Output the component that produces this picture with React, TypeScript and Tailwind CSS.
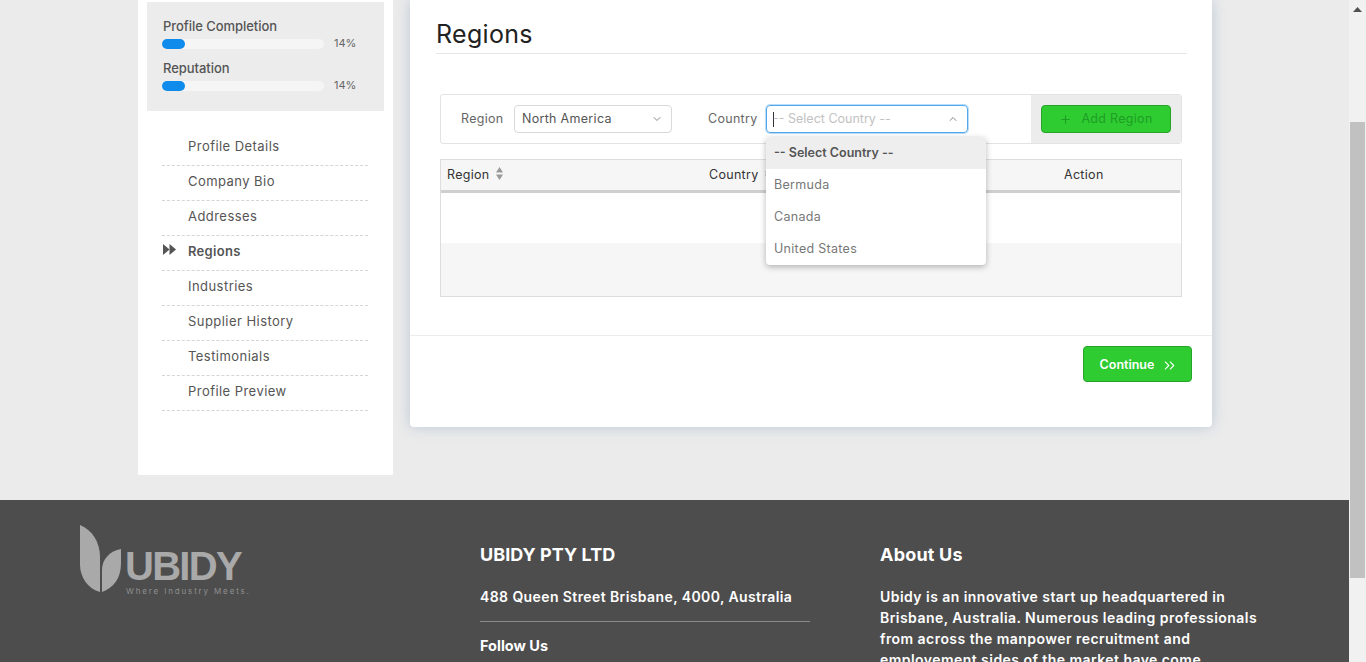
import { ChevronDown, ChevronUp, ChevronsRight, Plus } from 'lucide-react'

const navItems = ['Profile Details', 'Company Bio', 'Addresses', 'Regions', 'Industries', 'Supplier History', 'Testimonials', 'Profile Preview']
const countries = ['Bermuda', 'Canada', 'United States']

function Progress({ label }: { label: string }) {
  return (
    <div className="h-[42px]">
      <div className="h-[19px] pl-[16px] text-[13px] leading-[19px] font-medium tracking-[-0.05px] text-[#555]">{label}</div>
      <div className="mt-[1px] flex items-center pl-[15px]">
        <div className="h-[10px] w-[162px] rounded-full bg-[#f5f5f5]">
          <div className="h-[10px] w-[23px] rounded-full bg-[#0f8ceb]" />
        </div>
        <span className="-mt-[2px] ml-[10px] text-[11px] text-[#666]">14%</span>
      </div>
    </div>
  )
}

function SortIcon() {
  return (
    <svg width="7" height="13" viewBox="0 0 7 13" className="fill-[#999]">
      <path d="M3.500 0 7 5.500H0Z" />
      <path d="M3.500 13 0 7.500H7Z" />
    </svg>
  )
}

function Sidebar() {
  return (
    <aside className="h-[475px] w-[255px] shrink-0 bg-white px-[9px] pt-[2px]">
      <div className="h-[109px] bg-[#ececec] pt-[15px]">
        <Progress label="Profile Completion" />
        <Progress label="Reputation" />
      </div>
      <ul className="mx-[15px] mt-[20px] w-[206px]">
        {navItems.map(item => (
          <li key={item} className="relative flex h-[35px] items-center border-b border-dashed border-[#d5d5d5] pb-[2px] pl-[26px] text-[13px] tracking-[0.45px] text-[#555]">
            {item === 'Regions' && (
              <svg width="13" height="11" viewBox="0 0 13 11" className="absolute left-[1px] top-[8px] fill-[#555]">
                <path d="M0 0 6.500 5.500 0 11Z" />
                <path d="M6.500 0 13 5.500 6.500 11Z" />
              </svg>
            )}
            <span className={item === 'Regions' ? 'font-semibold tracking-[0.3px]' : ''}>{item}</span>
          </li>
        ))}
      </ul>
    </aside>
  )
}

function RegionForm() {
  return (
    <div className="relative mx-[4px] mt-[40px] flex h-[50px] w-[742px] items-center rounded-[3px] border border-[#e3e3e3] bg-white">
      <span className="ml-[20px] w-[53px] text-[12.500px] tracking-[0.3px] text-[#666]">Region</span>
      <div className="flex h-[28px] w-[158px] items-center justify-between rounded-[4px] border border-[#d9d9d9] px-[7px] text-[12.500px] tracking-[0.3px] text-[#555]">
        North America
        <ChevronDown size={12} className="mr-[1px] text-[#888]" />
      </div>
      <span className="ml-[36px] w-[58px] text-[12.500px] tracking-[0.3px] text-[#666]">Country</span>
      <div className="flex h-[28px] w-[202px] items-center justify-between rounded-[4px] border border-[#52a8ec] px-[6px] text-[12.500px] text-[#c2c2c2] shadow-[0_0_0_1px_#b9dcf8]">
        <span className="flex items-center">
          <span className="mr-[-1px] h-[15px] w-px bg-[#333]" />
          -- Select Country --
        </span>
        <ChevronUp size={12} className="mr-[2px] text-[#888]" />
      </div>
      <div className="ml-[63px] flex h-[48px] flex-1 items-center justify-center rounded-r-[3px] bg-[#ececec]">
        <div className="flex h-[28px] w-[130px] items-center justify-center gap-[9px] rounded-[4px] border border-[#28a32a] bg-[#2ecc30] text-[12.500px] tracking-[0.3px] text-[#1f9d27]">
          <Plus size={13} />
          Add Region
        </div>
      </div>

      <div className="absolute left-[325px] top-[42px] z-10 w-[220px] overflow-hidden rounded-[4px] bg-white text-[12.500px] tracking-[0.3px] text-[#777] shadow-[0_2px_6px_rgba(0,0,0,0.28)]">
        <div className="flex h-[32px] items-center bg-[#eee] px-[8px] pt-[1px] font-semibold tracking-normal text-[#555]">-- Select Country --</div>
        {countries.map(c => (
          <div key={c} className="flex h-[32px] items-center px-[8px] pt-[1px]">{c}</div>
        ))}
      </div>
    </div>
  )
}

function RegionTable() {
  return (
    <div className="mx-[4px] mt-[15px] h-[138px] w-[742px] border border-[#ddd] bg-[#f6f6f6]">
      <div className="grid h-[33px] w-[739px] grid-cols-[262px_355px_1fr] items-center border-b-[3px] border-[#cfcfcf] px-[6px] text-[12.500px] tracking-[0.3px] text-[#333]">
        <span className="flex items-center gap-[6px]">Region <span className="-mt-[3px]"><SortIcon /></span></span>
        <span className="flex items-center gap-[6px]">Country <span className="-mt-[3px]"><SortIcon /></span></span>
        <span>Action</span>
      </div>
      <div className="h-[50px] bg-white" />
    </div>
  )
}

function MainCard() {
  return (
    <main className="relative h-[427px] w-[802px] shrink-0 rounded-b-[4px] bg-white shadow-[0_0_14px_rgba(130,160,190,0.45)]">
      <div className="px-[26px] pt-[18px]">
        <h1 className="mb-0 h-[36px] w-[751px] border-b border-[#e6e6e6] text-[25px] leading-[33px] tracking-[0.3px] text-[#222]">Regions</h1>
        <RegionForm />
        <RegionTable />
      </div>
      <div className="mt-[38px] flex justify-end border-t border-[#ececec] pr-[20px] pt-[10px]">
        <button className="flex h-[36px] w-[109px] items-center justify-center gap-[7px] rounded-[4px] border border-[#28a32a] bg-[#2ecc30] pl-[3px] pt-[2px] text-[12.500px] font-semibold text-white">
          Continue
          <ChevronsRight size={17} strokeWidth={1.500} />
        </button>
      </div>
    </main>
  )
}

function Logo() {
  return (
    <div className="relative h-[70px] w-[180px]">
      <svg width="62" height="68" viewBox="0 0 62 68" className="fill-[#a9a9a9]">
        <path d="M0 0C12 5 20 17 20 32V67C8 64 0 52 0 40Z" />
        <path d="M22 67V45C22 34 30 26 41 24V38C41 54 33 63 22 67Z" />
      </svg>
      <span className="absolute left-[45px] top-[23px] font-['Liberation_Sans',sans-serif] text-[40px] leading-[37px] font-bold tracking-[-1.700px] text-[#a9a9a9]">UBIDY</span>
      <span className="absolute left-[46px] top-[60px] text-[8px] leading-[12px] tracking-[1.850px] text-[#8f8f8f]">Where Industry Meets.</span>
    </div>
  )
}

function Footer() {
  return (
    <footer className="flex h-[162px] overflow-hidden bg-[#4d4d4d] pl-[80px] pt-[25px] text-white">
      <div className="w-[400px] shrink-0">
        <Logo />
      </div>
      <div className="w-[330px] shrink-0 pt-[18px]">
        <h3 className="text-[18px] leading-[24px] font-bold tracking-[0.05px]">UBIDY PTY LTD</h3>
        <p className="mt-[19px] text-[14px] leading-[21px] font-semibold tracking-[0.4px]">488 Queen Street Brisbane, 4000, Australia</p>
        <div className="mt-[14px] border-t border-[#8a8a8a]" />
        <h4 className="mt-[13px] text-[14.500px] leading-[21px] font-bold">Follow Us</h4>
      </div>
      <div className="ml-[70px] w-[385px] shrink-0 pt-[18px]">
        <h3 className="text-[18px] leading-[24px] font-bold tracking-[0.2px]">About Us</h3>
        <p className="mt-[19px] text-[14px] leading-[21px] font-semibold tracking-[0.45px]">
          Ubidy is an innovative start up headquartered in Brisbane, Australia. Numerous leading professionals from across the manpower recruitment and employement sides of the market have come
        </p>
      </div>
    </footer>
  )
}

function Scrollbar() {
  return (
    <div className="flex h-[662px] w-[17px] shrink-0 flex-col items-center bg-[#f1f1f1]">
      <svg width="9" height="5" viewBox="0 0 9 5" className="mt-[7px] fill-[#505050]">
        <path d="M4.500 0 9 5H0Z" />
      </svg>
      <div className="mt-[110px] h-[456px] w-[15px] bg-[#c1c1c1]" />
    </div>
  )
}

export default function App() {
  return (
    <div className="flex h-[662px] w-[1366px] overflow-hidden font-['Inter',sans-serif]">
      <div className="w-[1349px] shrink-0 bg-[#ebebeb]">
        <div className="flex h-[500px] gap-[17px] pl-[138px]">
          <Sidebar />
          <MainCard />
        </div>
        <Footer />
      </div>
      <Scrollbar />
    </div>
  )
}
